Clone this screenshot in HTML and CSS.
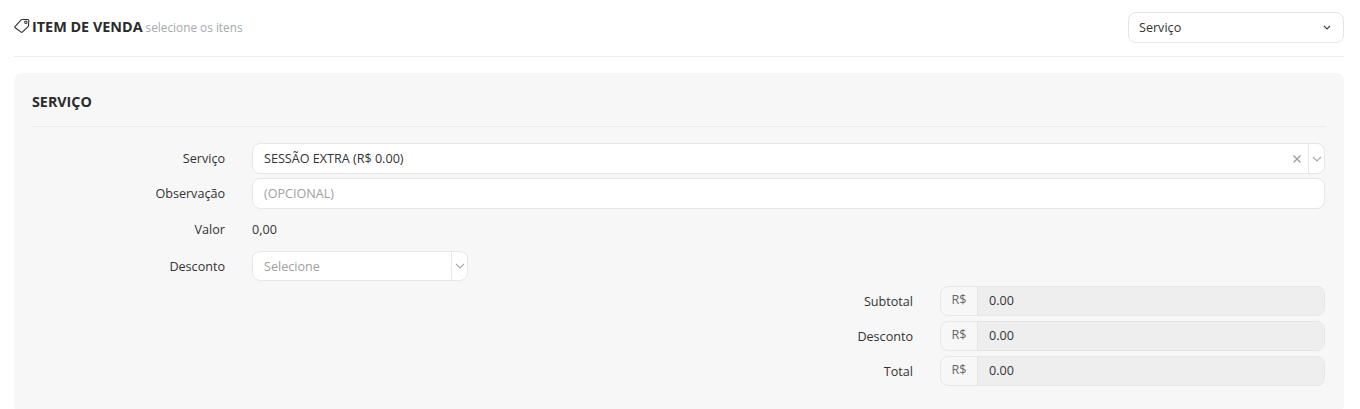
FILE: index.html
```html
<!DOCTYPE html>
<html lang="pt-BR">
<head>
  <meta charset="UTF-8">
  <title>Item de venda</title>
  <link rel="stylesheet" href="styles.css">
</head>
<body>
<div class="page">

  <!-- Cabecalho -->
  <div class="page-head">
    <div class="page-title">
      <svg class="tag-icon" width="16" height="16" viewBox="0 0 17 16" fill="none" stroke="#2b2b2b" stroke-width="1.1">
        <path d="M1 8.6 L7.6 1.6 Q8 1.2 8.6 1.2 L14.6 1 Q15.8 1 15.8 2.2 L15.4 7.6 Q15.4 8.2 15 8.6 L8.8 14.6 Q8.2 15.2 7.6 14.6 L1 9.6 Q0.6 9.1 1 8.6 Z"/>
        <circle cx="12.6" cy="4" r="1.3"/>
      </svg>
      <strong>ITEM DE VENDA</strong>
      <small>selecione os itens</small>
    </div>
    <div class="type-select">
      <span>Serviço</span>
      <svg width="8" height="5" viewBox="0 0 8 5" fill="none" stroke="#444" stroke-width="1.2"><path d="M1 1l3 3 3-3"/></svg>
    </div>
  </div>

  <!-- Painel -->
  <div class="panel">
    <h2 class="panel-title">SERVIÇO</h2>

    <div class="row row-service">
      <label>Serviço</label>
      <div class="field combo">
        <span class="combo-text">SESSÃO EXTRA (R$ 0.00)</span>
        <svg class="clear-icon" width="8" height="8" viewBox="0 0 8 8" stroke="#999" stroke-width="1.2"><path d="M.5.5l7 7M7.5.5l-7 7"/></svg>
        <span class="combo-arrow">
          <svg width="10" height="6" viewBox="0 0 10 6" fill="none" stroke="#aaa" stroke-width="1.2"><path d="M1 1l4 4 4-4"/></svg>
        </span>
      </div>
    </div>

    <div class="row row-obs">
      <label>Observação</label>
      <div class="field"><span class="placeholder">(OPCIONAL)</span></div>
    </div>

    <div class="row row-valor">
      <label>Valor</label>
      <span class="value">0,00</span>
    </div>

    <div class="row row-desc">
      <label>Desconto</label>
      <div class="field combo combo-small">
        <span class="combo-text placeholder">Selecione</span>
        <span class="combo-arrow">
          <svg width="10" height="6" viewBox="0 0 10 6" fill="none" stroke="#aaa" stroke-width="1.2"><path d="M1 1l4 4 4-4"/></svg>
        </span>
      </div>
    </div>

    <div class="totals">
      <div class="total-row">
        <label>Subtotal</label>
        <div class="money"><span class="addon">R$</span><span class="amount">0.00</span></div>
      </div>
      <div class="total-row">
        <label>Desconto</label>
        <div class="money"><span class="addon">R$</span><span class="amount">0.00</span></div>
      </div>
      <div class="total-row">
        <label>Total</label>
        <div class="money"><span class="addon">R$</span><span class="amount">0.00</span></div>
      </div>
    </div>
  </div>

</div>
</body>
</html>
```

FILE: styles.css
```css
body {
  margin: 0;
  font-family: "Open Sans", sans-serif;
  font-size: 12.6px;
  color: #333;
  background-color: #fff;
}

.page {
  padding: 12px 16px 0 14px;
  height: 397px;
  overflow: hidden;
}

/* Cabecalho */
.page-head {
  display: flex;
  justify-content: space-between;
  height: 44px;
  border-bottom: 1px solid #eee;
}

.page-title {
  display: flex;
  align-items: center;
  height: 29px;
}

.tag-icon {
  margin-right: 2px;
  margin-top: -1px;
}

.page-title strong {
  font-size: 14.4px;
  font-weight: 700;
  color: #2b2b2b;
}

.page-title small {
  margin-left: 3px;
  margin-top: 1px;
  font-size: 11.8px;
  color: #a3a9ae;
}

.type-select {
  display: flex;
  align-items: center;
  justify-content: space-between;
  box-sizing: border-box;
  width: 216px;
  height: 31px;
  padding: 0 12px 0 10px;
  border: 1px solid #e6e6e6;
  border-radius: 8px;
}

/* Painel */
.panel {
  margin-top: 16px;
  padding: 0 19px 0 18px;
  height: 340px;
  background-color: #f7f7f7;
  border-radius: 8px;
}

.panel-title {
  margin: 0 -1px 16px 0;
  height: 53px;
  line-height: 57px;
  font-size: 14.3px;
  font-weight: 700;
  color: #2b2b2b;
  border-bottom: 1px solid #ececec;
}

.row {
  display: flex;
  align-items: center;
}

.row label {
  width: 193px;
  margin-right: 27px;
  text-align: right;
}

.row-service { height: 31px; }
.row-obs { height: 31px; margin-top: 4px; }
.row-valor { height: 31px; margin-top: 5px; }
.row-desc { height: 30px; margin-top: 6px; }

.field {
  flex: 1;
  box-sizing: border-box;
  height: 100%;
  display: flex;
  align-items: center;
  padding-left: 11px;
  background-color: #fff;
  border: 1px solid #e6e6e6;
  border-radius: 8px;
}

.placeholder {
  color: #a0a0a0;
}

.combo-text {
  flex: 1;
}

.combo-small {
  flex: none;
  width: 216px;
}

.clear-icon {
  margin-right: 7px;
}

.combo-arrow {
  display: flex;
  align-items: center;
  justify-content: center;
  align-self: stretch;
  width: 15px;
  border-left: 1px solid #e6e6e6;
}

/* Totais */
.totals {
  margin-top: 5px;
}

.total-row {
  display: flex;
  align-items: center;
  justify-content: flex-end;
  height: 30px;
  margin-bottom: 5px;
}

.total-row label {
  margin-right: 27px;
}

.money {
  display: flex;
  box-sizing: border-box;
  width: 385px;
  height: 30px;
  border: 1px solid #e6e6e6;
  border-radius: 8px;
  overflow: hidden;
}

.addon {
  width: 36px;
  line-height: 26px;
  text-align: center;
  color: #666;
  border-right: 1px solid #e6e6e6;
}

.amount {
  flex: 1;
  padding-left: 11px;
  line-height: 28px;
  background-color: #eee;
}
```
